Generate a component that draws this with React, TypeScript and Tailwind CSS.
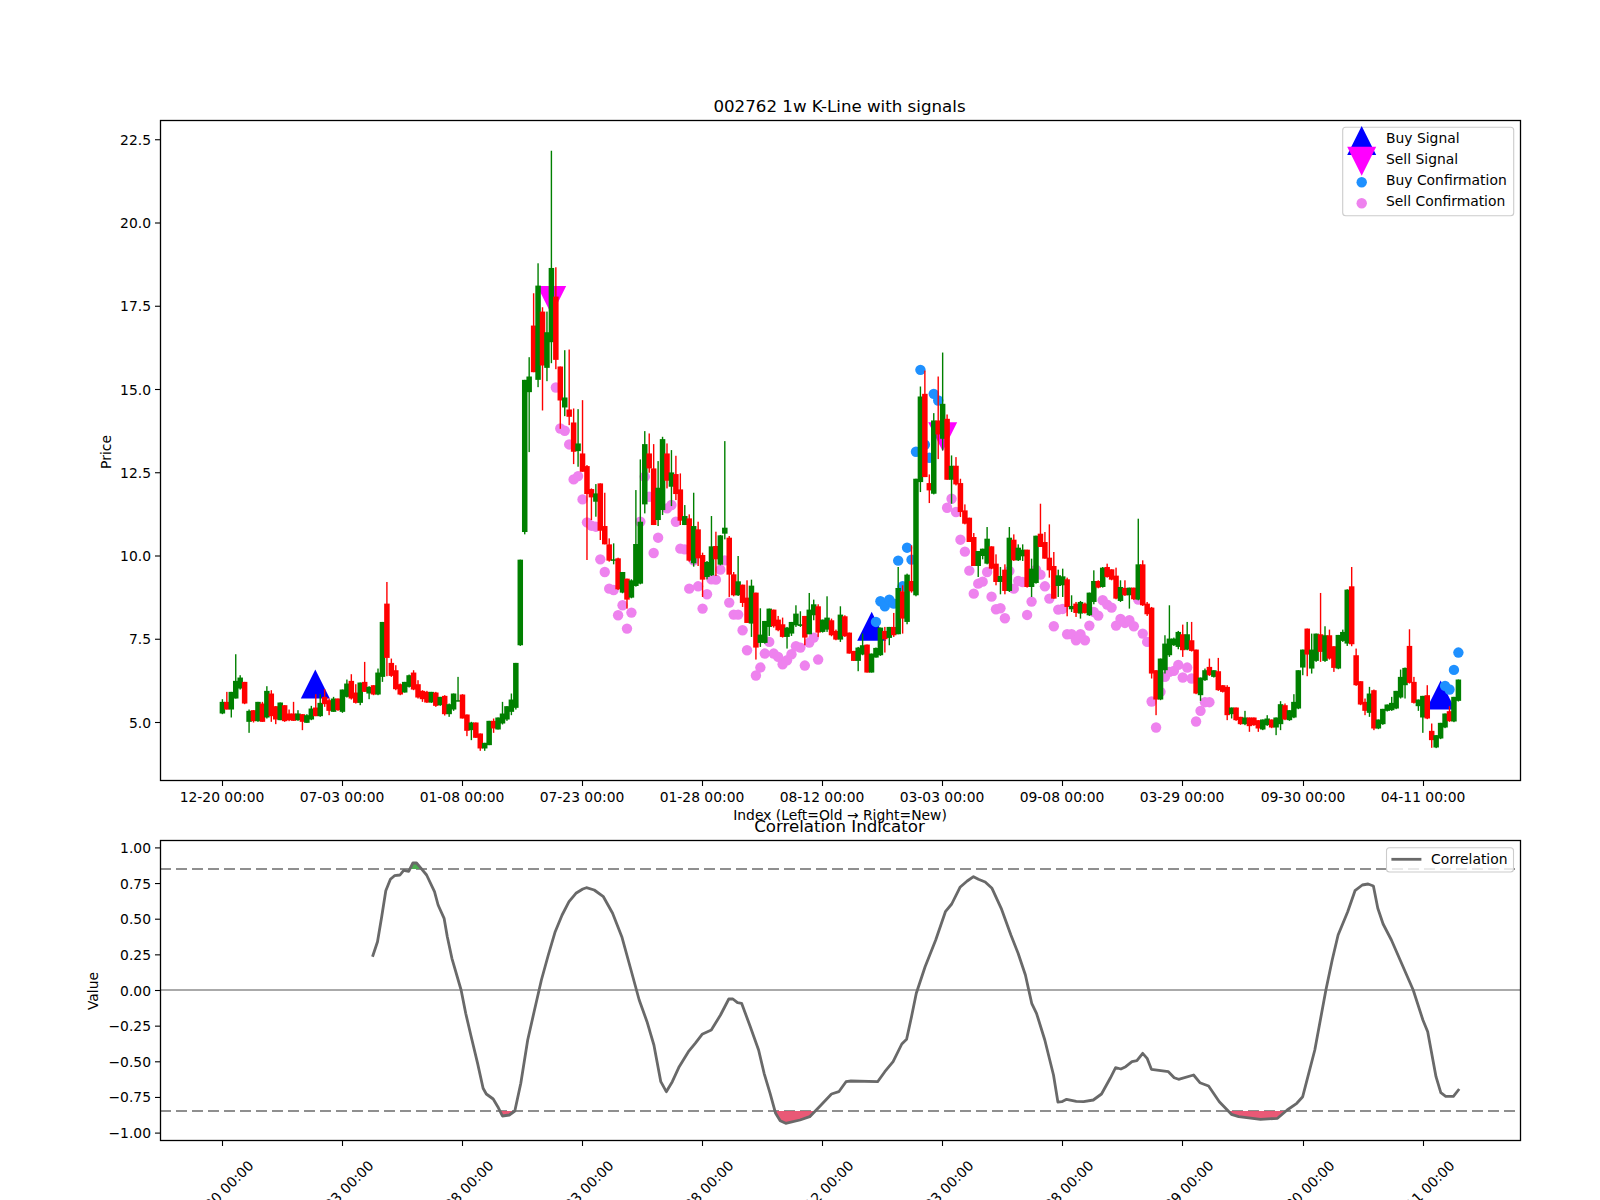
const FONT = "font-['DejaVu_Sans',sans-serif]";

// high, body top, body bottom, low per weekly bar, oldest first
const BARS = `g 5.7 5.62 5.27 5.25
r 5.92 5.62 5.39 5.39
g 5.92 5.92 5.39 5.15
g 7.05 6.25 5.72 5.72
g 6.42 6.35 6.02 5.99
r 6.22 6.22 5.57 5.55
g 5.39 5.35 5.02 4.69
r 5.37 5.37 5.04 5.0
g 5.62 5.62 5.04 5.02
r 5.62 5.57 5.02 5.02
g 6.09 5.95 5.15 5.12
r 5.97 5.87 5.19 5.02
r 5.49 5.49 5.09 4.95
g 5.6 5.6 5.07 5.07
r 5.52 5.52 5.04 5.02
r 5.39 5.27 5.07 5.04
r 5.62 5.27 5.05 5.05
g 5.37 5.27 5.07 5.05
r 5.25 5.25 5.02 4.77
g 5.25 5.22 4.99 4.99
g 5.5 5.42 5.09 5.07
r 5.85 5.45 5.19 5.19
g 5.85 5.59 5.19 5.17
r 6.0 5.77 5.55 5.47
r 5.72 5.67 5.35 5.22
g 5.77 5.72 5.32 5.32
r 5.72 5.72 5.37 5.35
g 5.99 5.99 5.32 5.29
g 6.29 6.17 5.77 5.75
r 6.45 6.25 5.72 5.69
r 6.15 5.9 5.59 5.57
g 6.2 6.2 5.59 5.52
r 6.82 6.22 5.92 5.92
g 6.09 6.07 5.87 5.7
r 6.12 6.12 5.84 5.82
g 6.62 6.5 5.84 5.82
g 8.02 8.02 6.37 6.22
r 9.22 8.57 6.94 6.39
r 6.92 6.79 6.4 6.37
r 6.72 6.57 6.0 5.97
r 6.17 6.15 5.84 5.82
g 6.22 6.22 5.9 5.9
g 6.44 6.42 6.07 6.05
r 6.57 6.5 5.99 5.97
r 6.27 6.15 5.75 5.72
r 5.97 5.95 5.7 5.62
r 5.95 5.92 5.6 5.59
g 5.92 5.92 5.6 5.59
r 5.92 5.9 5.5 5.47
g 5.77 5.77 5.52 5.5
r 5.82 5.8 5.25 5.21
g 5.57 5.55 5.25 5.17
g 5.87 5.87 5.39 5.35
g 6.37 5.67 5.65 5.64
r 5.85 5.84 5.12 5.12
r 5.24 5.24 4.75 4.59
g 5.02 5.0 4.77 4.47
r 5.0 5.0 4.54 4.54
r 4.67 4.67 4.22 4.15
g 4.39 4.39 4.22 4.15
g 5.05 5.05 4.32 4.32
r 5.12 5.05 4.82 4.69
g 5.15 5.15 4.79 4.79
g 5.62 5.27 4.97 4.94
g 5.49 5.49 5.09 5.05
g 5.87 5.69 5.32 5.22
g 6.79 6.79 5.44 5.39
g 9.89 9.89 7.32 7.3
g 15.29 15.29 10.72 10.65
g 15.97 15.39 14.92 13.12
r 17.89 16.92 15.52 15.52
g 18.79 18.12 15.29 15.07
r 17.47 17.34 15.72 14.37
g 17.34 16.72 15.65 15.25
g 22.17 18.65 16.42 15.79
r 18.67 17.79 15.89 15.61
r 15.69 15.69 14.67 13.82
g 16.18 14.76 14.46 14.2
r 16.2 14.4 14.18 13.93
r 14.43 14.01 13.13 12.76
g 14.41 13.38 13.15 12.68
r 14.68 13.08 12.53 12.53
r 12.73 12.7 11.86 9.88
r 12.03 12.01 11.76 11.08
g 12.16 11.88 11.63 11.18
r 12.18 12.18 10.76 10.48
r 11.9 10.9 10.35 10.35
r 10.53 10.35 9.86 9.83
g 10.38 9.9 9.86 9.75
r 9.95 9.93 9.0 8.98
g 9.52 9.52 8.9 8.88
r 9.32 9.32 8.69 8.42
g 9.3 9.27 8.75 8.73
g 11.98 10.36 9.1 9.08
g 12.9 11.03 9.17 9.15
g 13.75 13.36 11.55 11.28
r 13.68 13.08 12.63 12.5
r 13.36 12.63 10.93 10.93
g 12.85 12.05 11.08 10.9
g 13.58 13.51 11.38 11.23
r 13.38 13.08 12.26 12.03
g 13.18 12.51 12.08 11.5
r 13.01 12.46 11.86 11.68
r 12.48 12.0 11.06 10.93
g 11.53 11.2 10.93 10.93
r 11.25 11.13 9.86 9.83
g 11.9 10.9 9.78 9.68
r 11.03 10.8 9.93 9.7
r 10.1 10.03 9.29 8.77
g 9.85 9.82 9.37 9.3
g 11.2 10.29 9.42 9.4
r 10.73 10.3 9.9 9.4
g 10.63 10.62 9.74 9.72
g 13.45 10.85 10.67 10.5
r 10.6 10.55 9.44 8.77
r 9.52 9.45 8.82 8.79
g 10.0 9.24 8.82 8.8
r 9.14 9.14 8.59 8.47
r 9.27 8.75 7.99 7.99
g 9.29 9.11 7.97 7.57
r 8.9 8.9 7.25 6.89
g 8.43 7.64 7.39 7.27
g 8.05 8.05 7.39 7.37
g 8.42 8.42 7.87 7.6
r 8.39 8.39 7.89 7.85
r 8.2 8.09 7.77 7.74
r 8.15 7.95 7.57 7.55
g 7.87 7.85 7.57 7.22
g 8.02 8.02 7.67 7.6
g 8.52 8.27 7.92 7.87
g 8.34 7.95 7.9 7.87
r 8.2 8.2 7.55 7.32
g 8.89 8.39 7.65 7.65
g 8.69 8.55 8.22 8.07
r 8.55 8.49 7.7 7.57
g 8.09 8.09 7.72 7.7
g 8.79 8.15 7.79 7.72
r 8.12 8.07 7.62 7.59
r 7.79 7.75 7.49 7.47
g 8.49 8.24 7.49 7.42
r 8.22 8.19 7.59 7.57
r 7.7 7.7 7.07 7.07
r 7.15 7.15 6.85 6.85
g 7.27 7.25 6.85 6.54
g 7.67 7.32 7.04 7.02
r 7.34 7.34 6.5 6.5
g 7.07 7.07 6.5 6.5
g 7.25 7.24 6.95 6.95
g 7.85 7.85 7.02 7.0
r 7.87 7.75 7.5 7.1
g 7.87 7.87 7.54 7.32
r 8.29 7.87 7.62 7.57
g 9.67 9.04 7.65 7.65
r 9.12 8.94 8.12 7.67
g 9.47 9.44 8.02 7.95
r 10.32 9.25 8.94 8.9
g 12.32 12.32 8.82 8.79
g 15.09 14.79 12.22 11.92
r 15.57 14.87 12.37 12.37
r 12.45 12.19 11.97 11.59
g 14.29 14.07 11.87 11.85
r 15.39 14.07 13.65 12.91
g 16.11 14.57 13.52 13.17
r 14.25 14.12 12.29 12.29
g 13.02 12.71 12.29 11.57
r 12.97 12.71 12.15 12.12
r 12.32 12.19 11.32 11.17
r 11.55 11.37 10.97 10.95
r 11.15 11.15 10.42 10.42
r 10.69 10.57 9.7 9.7
g 10.15 10.15 9.7 9.37
g 10.22 10.22 10.0 9.9
g 10.87 10.52 9.77 9.75
r 10.29 10.29 9.62 9.6
r 10.05 9.77 9.22 9.12
g 9.67 9.4 9.22 8.85
r 9.75 9.59 8.95 8.85
g 10.87 10.55 8.95 8.92
r 10.65 10.49 9.87 9.85
g 10.35 10.25 9.87 9.85
g 10.35 10.19 9.99 9.85
r 10.19 10.19 9.07 9.05
g 9.92 9.62 9.07 8.77
g 10.61 10.61 9.19 9.17
r 11.57 10.67 10.27 10.27
r 10.72 10.42 9.92 9.92
r 10.95 9.95 9.57 9.35
r 10.12 9.7 8.72 8.72
g 9.59 9.42 9.1 8.77
g 9.62 9.39 9.12 8.77
r 9.35 9.3 8.47 8.19
g 8.82 8.5 8.4 8.32
r 8.62 8.57 8.29 8.17
g 8.65 8.62 8.27 8.12
r 8.6 8.57 8.29 8.27
g 8.9 8.9 8.22 8.2
g 9.57 9.25 8.62 8.55
r 9.27 9.25 9.05 9.03
g 9.67 9.65 9.07 9.05
r 9.77 9.67 9.37 9.35
r 9.6 9.6 9.29 9.27
r 9.65 9.41 8.72 8.7
g 9.27 9.07 8.65 8.62
r 9.27 9.04 8.82 8.8
g 9.05 9.05 8.82 8.42
r 9.05 9.05 8.7 8.68
g 11.12 9.75 8.69 8.67
r 9.87 9.75 8.52 8.5
r 8.62 8.57 8.25 8.2
r 8.47 8.45 6.47 6.32
r 6.57 6.57 5.69 5.22
g 6.92 6.92 5.69 5.67
g 7.62 7.37 6.57 6.47
g 8.52 7.52 7.02 6.97
g 7.55 7.52 7.32 7.3
g 7.75 7.72 7.27 7.2
r 7.94 7.65 7.17 6.97
g 8.02 7.65 7.19 7.17
r 8.02 7.47 7.15 7.13
r 7.19 7.19 5.87 5.85
g 6.35 6.35 5.82 5.65
g 6.62 6.57 6.27 6.25
r 6.92 6.67 6.42 6.4
g 6.57 6.57 6.37 6.35
r 6.94 6.54 5.97 5.95
r 6.12 6.12 5.92 5.9
r 6.12 6.07 5.22 5.07
g 5.45 5.45 5.25 5.12
r 5.45 5.45 5.07 5.05
r 5.17 5.17 4.95 4.93
g 5.35 5.15 4.95 4.92
r 5.15 5.15 4.89 4.72
r 5.15 5.15 4.92 4.9
r 5.07 5.07 4.82 4.72
g 5.09 5.09 4.79 4.77
g 5.22 5.12 4.92 4.9
r 5.09 5.09 4.85 4.83
g 5.15 5.15 4.85 4.62
g 5.64 5.55 4.95 4.77
r 5.57 5.52 5.09 5.07
g 5.37 5.37 5.07 5.05
g 5.85 5.62 5.15 5.13
g 6.57 6.57 5.42 5.4
g 7.19 7.19 6.65 6.42
r 7.82 7.82 7.04 6.39
g 7.67 7.19 6.62 6.47
g 7.67 7.67 6.85 6.82
r 8.89 7.65 7.12 6.82
g 7.89 7.62 6.85 6.82
r 7.79 7.62 6.92 6.89
r 7.29 7.29 6.64 6.52
g 7.63 7.63 6.62 6.6
g 7.79 7.72 7.45 7.42
g 9.0 8.99 7.37 7.3
r 9.67 9.09 7.35 7.29
r 7.22 7.02 6.12 6.1
r 6.24 6.24 5.54 5.52
r 5.72 5.62 5.35 5.22
g 6.07 5.87 5.29 5.17
r 5.99 5.97 4.82 4.77
g 5.09 5.09 4.82 4.8
g 5.41 5.41 4.95 4.93
g 5.54 5.54 5.35 5.33
g 5.77 5.59 5.37 5.35
g 5.95 5.95 5.42 5.4
g 6.59 6.37 5.75 5.72
g 6.65 6.64 6.12 5.72
r 7.8 7.3 6.19 6.17
r 6.37 6.22 5.59 5.57
g 5.69 5.69 5.49 5.35
g 5.8 5.8 5.15 4.69
r 6.12 5.82 5.12 5.1
r 4.97 4.75 4.47 4.24
g 4.62 4.62 4.25 4.23
g 4.99 4.99 4.52 4.5
g 5.27 5.27 4.85 4.83
r 5.49 5.34 5.04 5.02
g 5.77 5.77 5.03 5.01
g 6.29 6.29 5.65 5.63`
  .split("\n")
  .map((line) => {
    const [c, ...v] = line.split(" ");
    return { c, hi: +v[0], top: +v[1], bot: +v[2], lo: +v[3] };
  });

const SELL_CONF: [number, number][] = [
  [75, 15.06], [76, 13.83], [77, 13.76], [78, 13.35], [79, 12.3], [80, 12.4], [81, 11.7], [82, 11.01],
  [83, 10.91], [84, 10.88], [85, 9.9], [86, 9.52], [87, 9.02], [88, 8.98], [89, 8.22], [90, 8.52],
  [91, 7.82], [92, 8.3], [94, 11.03], [95, 12.38], [96, 11.78], [97, 10.09], [98, 10.55], [100, 11.43],
  [101, 11.53], [102, 11.03], [103, 10.22], [104, 10.2], [105, 9.02], [106, 9.87], [107, 9.09], [108, 8.42],
  [109, 8.85], [110, 9.3], [111, 9.29], [112, 9.59], [113, 9.87], [114, 8.6], [115, 8.24], [116, 8.24],
  [117, 7.77], [118, 7.17], [120, 6.41], [121, 6.65], [122, 7.07], [123, 7.42], [124, 7.07], [125, 6.97],
  [126, 6.75], [127, 6.87], [128, 7.05], [129, 7.29], [130, 7.25], [131, 6.71], [132, 7.4], [133, 7.55],
  [134, 6.89], [163, 11.45], [164, 11.72], [165, 11.32], [166, 10.49], [167, 10.13], [168, 9.56], [169, 8.87],
  [170, 9.17], [171, 9.23], [172, 9.52], [173, 8.78], [174, 8.4], [175, 8.43], [176, 8.13], [177, 9.55],
  [178, 9.02], [179, 9.25], [180, 9.22], [181, 8.23], [182, 8.63], [183, 9.59], [184, 9.44], [185, 9.09],
  [186, 8.72], [187, 7.89], [188, 8.39], [189, 8.41], [190, 7.65], [191, 7.65], [192, 7.47], [193, 7.65],
  [194, 7.47], [195, 7.91], [196, 8.32], [197, 8.21], [198, 8.67], [199, 8.54], [200, 8.45], [201, 7.91],
  [202, 8.11], [203, 7.99], [204, 8.07], [205, 7.89], [206, 8.69], [207, 7.67], [208, 7.42], [209, 5.63],
  [210, 4.85], [211, 5.92], [212, 6.37], [213, 6.52], [214, 6.55], [215, 6.73], [216, 6.35], [217, 6.65],
  [218, 6.32], [219, 5.03], [220, 5.35], [221, 5.61], [222, 5.61],
];

const BUY_CONF: [number, number][] = [
  [147, 8.02], [148, 8.64], [149, 8.49], [150, 8.69], [151, 8.57], [152, 9.86], [153, 9.09], [154, 10.25],
  [155, 9.89], [156, 13.13], [157, 15.59], [158, 13.34], [159, 12.95], [160, 14.87], [161, 14.67],
  [275, 6.1], [276, 5.99], [277, 6.58], [278, 7.1],
];

const TICKS = [222, 342, 462, 582, 702, 822, 942, 1062, 1182, 1303, 1423];
const DATES = [
  "12-20 00:00", "07-03 00:00", "01-08 00:00", "07-23 00:00", "01-28 00:00", "08-12 00:00",
  "03-03 00:00", "09-08 00:00", "03-29 00:00", "09-30 00:00", "04-11 00:00",
];

const barX = (i: number) => 222.4 + 4.446 * i;
const priceY = (p: number) => 722.5 - (p - 5) * 33.3;
const valueY = (v: number) => 990.5 - 142.6 * v;

// correlation curve traced as x, y
const CURVE: [number, number][] = [
  ...[
    [637, 470], [648, 425], [657, 350], [666, 272], [676, 238], [685, 227], [697, 225], [705, 211], [716, 214],
    [725, 189], [733, 189], [743, 205], [755, 225], [772, 275], [780, 315], [793, 355], [800, 410], [810, 475],
    [830, 570], [840, 640], [852, 710], [866, 790], [878, 865], [885, 882], [900, 897], [910, 920], [920, 948],
    [935, 945], [947, 933], [960, 850], [975, 720], [990, 630], [1005, 540], [1020, 465], [1035, 395], [1050, 345],
    [1065, 305], [1080, 280], [1095, 267], [1103, 263], [1120, 270], [1140, 290], [1160, 340], [1180, 410],
    [1200, 510], [1218, 600], [1235, 665], [1250, 735], [1265, 845], [1277, 875], [1290, 845], [1305, 800],
    [1325, 755], [1340, 730], [1355, 703], [1375, 690], [1395, 645], [1413, 597], [1422, 597], [1432, 608],
    [1441, 610], [1460, 680], [1478, 750], [1490, 820], [1503, 880], [1515, 940], [1525, 962], [1537, 970],
  ].map(([x, y]): [number, number] => [80 + x / 2.178, 800 + y / 3]),
  ...[
    [0, 960], [20, 950], [40, 920], [65, 882], [80, 875], [95, 845], [105, 843], [160, 845], [175, 815], [192, 785],
    [210, 732], [220, 718], [230, 650], [240, 580], [258, 500], [280, 420], [300, 335], [313, 312], [330, 262],
    [345, 243], [358, 230], [368, 238], [382, 246], [396, 265], [415, 325], [435, 405], [450, 460], [465, 525],
    [478, 610], [488, 640], [505, 720], [523, 825], [532, 906], [540, 905], [550, 898], [570, 904], [585, 905],
    [605, 900], [622, 882], [640, 835], [651, 803], [662, 807], [672, 800], [685, 785], [695, 782], [707, 760],
    [716, 775], [725, 808], [760, 815], [772, 833], [781, 838], [812, 825], [825, 848], [843, 858], [865, 905],
    [890, 943], [905, 950], [950, 958], [985, 955], [1005, 930], [1025, 910], [1037, 890], [1062, 750], [1085, 570],
    [1098, 480], [1110, 405], [1130, 335], [1145, 272], [1160, 255], [1172, 252], [1183, 258], [1192, 325],
    [1203, 372], [1220, 420], [1265, 570], [1285, 660], [1295, 695], [1312, 830], [1322, 878], [1332, 889],
    [1348, 889], [1360, 867],
  ].map(([x, y]): [number, number] => [800 + x / 2.063, 800 + y / 3]),
];
const curvePts = CURVE.map(([x, y]) => `${x.toFixed(1)},${y.toFixed(1)}`).join(" ");

function Up({ x, y }: { x: number; y: number }) {
  return <polygon points={`${x - 14.5},${y + 14.5} ${x + 14.5},${y + 14.5} ${x},${y - 14.5}`} fill="#0000ff" />;
}

function Down({ x, y }: { x: number; y: number }) {
  return <polygon points={`${x - 14.5},${y - 14.5} ${x + 14.5},${y - 14.5} ${x},${y + 14.5}`} fill="#ff00ff" />;
}

function PriceChart() {
  return (
    <svg width={1600} height={830} viewBox="0 0 1600 830" className={`block ${FONT}`} fontSize="13.89">
      <text x={839.5} y={112} textAnchor="middle" fontSize="16.67">002762 1w K-Line with signals</text>

      <Up x={315.3} y={684} />
      <Up x={871.7} y={626.2} />
      <Up x={1440.7} y={695} />
      <Down x={551.7} y={300.5} />
      <Down x={942.7} y={436.7} />

      {SELL_CONF.map(([i, p]) => (
        <circle key={i} cx={barX(i)} cy={priceY(p)} r={5.2} fill="#ee82ee" />
      ))}
      {BUY_CONF.map(([i, p]) => (
        <circle key={i} cx={barX(i)} cy={priceY(p)} r={5.2} fill="#1e90ff" />
      ))}

      {BARS.map((b, i) => {
        const color = b.c === "g" ? "#008000" : "#ff0000";
        return (
          <g key={i} fill={color}>
            <rect x={barX(i) - 0.7} y={priceY(b.hi)} width={1.4} height={priceY(b.lo) - priceY(b.hi)} />
            <rect x={barX(i) - 2.75} y={priceY(b.top)} width={5.5} height={Math.max(1.5, priceY(b.bot) - priceY(b.top))} />
          </g>
        );
      })}

      <rect x={160.5} y={120.5} width={1360} height={660} fill="none" stroke="#000" strokeWidth={1.3} />

      {TICKS.map((x, i) => (
        <g key={x}>
          <line x1={x + 0.5} x2={x + 0.5} y1={781} y2={786} stroke="#000" strokeWidth={1.1} />
          <text x={x} y={801.5} textAnchor="middle">{DATES[i]}</text>
        </g>
      ))}
      {["5.0", "7.5", "10.0", "12.5", "15.0", "17.5", "20.0", "22.5"].map((t) => (
        <g key={t}>
          <line x1={155} x2={160} y1={priceY(+t)} y2={priceY(+t)} stroke="#000" strokeWidth={1.1} />
          <text x={151} y={priceY(+t) + 5} textAnchor="end">{t}</text>
        </g>
      ))}

      <text x={840} y={820} textAnchor="middle">Index (Left=Old → Right=New)</text>
      <text transform="translate(111 452) rotate(-90)" textAnchor="middle">Price</text>

      <rect x={1342.7} y={127.3} width={171} height={88.4} rx={3} fill="#fff" fillOpacity={0.8} stroke="#ccc" strokeWidth={1.1} />
      <Up x={1361.7} y={140.5} />
      <Down x={1361.7} y={161.2} />
      <circle cx={1361.7} cy={182.3} r={5.2} fill="#1e90ff" />
      <circle cx={1361.7} cy={203.3} r={5.2} fill="#ee82ee" />
      <text x={1386} y={143}>Buy Signal</text>
      <text x={1386} y={164}>Sell Signal</text>
      <text x={1386} y={185}>Buy Confirmation</text>
      <text x={1386} y={206}>Sell Confirmation</text>
    </svg>
  );
}

function CorrelationChart() {
  return (
    <svg width={1600} height={370} viewBox="0 830 1600 370" className={`block overflow-visible ${FONT}`} fontSize="13.89">
      <defs>
        <clipPath id="below">
          <rect x={160} y={1111} width={1360} height={29} />
        </clipPath>
        <clipPath id="above">
          <rect x={160} y={840} width={1360} height={29} />
        </clipPath>
      </defs>
      <text x={839.5} y={832} textAnchor="middle" fontSize="16.67">Correlation Indicator</text>

      <line x1={160} x2={1520} y1={990} y2={990} stroke="#aaa" strokeWidth={2.2} />
      <line x1={160} x2={1520} y1={869} y2={869} stroke="#8f8f8f" strokeWidth={2.2} strokeDasharray="11 5" />
      <line x1={160} x2={1520} y1={1111} y2={1111} stroke="#8f8f8f" strokeWidth={2.2} strokeDasharray="11 5" />

      <polygon points={`${curvePts} 1459,1111 373,1111`} fill="#e8506f" fillOpacity={0.95} clipPath="url(#below)" />
      <polygon points={`${curvePts} 1459,869 373,869`} fill="#4caf50" clipPath="url(#above)" />
      <polyline points={curvePts} fill="none" stroke="#696969" strokeWidth={2.8} strokeLinejoin="round" />

      <rect x={160.5} y={840.5} width={1360} height={300} fill="none" stroke="#000" strokeWidth={1.3} />

      {TICKS.map((x, i) => (
        <g key={x}>
          <line x1={x + 0.5} x2={x + 0.5} y1={1141} y2={1146} stroke="#000" strokeWidth={1.1} />
          <text transform={`translate(${x - 1} 1193) rotate(-45)`} textAnchor="middle" dy="0.35em">{DATES[i]}</text>
        </g>
      ))}
      {["1.00", "0.75", "0.50", "0.25", "0.00", "−0.25", "−0.50", "−0.75", "−1.00"].map((t) => {
        const y = valueY(Number(t.replace("−", "-")));
        return (
          <g key={t}>
            <line x1={155} x2={160} y1={y} y2={y} stroke="#000" strokeWidth={1.1} />
            <text x={151} y={y + 5} textAnchor="end">{t}</text>
          </g>
        );
      })}
      <text transform="translate(98 991) rotate(-90)" textAnchor="middle">Value</text>

      <rect x={1386.5} y={847.7} width={127} height={24.3} rx={3} fill="#fff" fillOpacity={0.8} stroke="#ccc" strokeWidth={1.1} />
      <line x1={1391.4} x2={1421.4} y1={859.3} y2={859.3} stroke="#696969" strokeWidth={2.8} />
      <text x={1431} y={864}>Correlation</text>
    </svg>
  );
}

export default function App() {
  return (
    <div className="w-[1600px] h-[1200px] overflow-hidden bg-white text-black">
      <PriceChart />
      <CorrelationChart />
    </div>
  );
}
